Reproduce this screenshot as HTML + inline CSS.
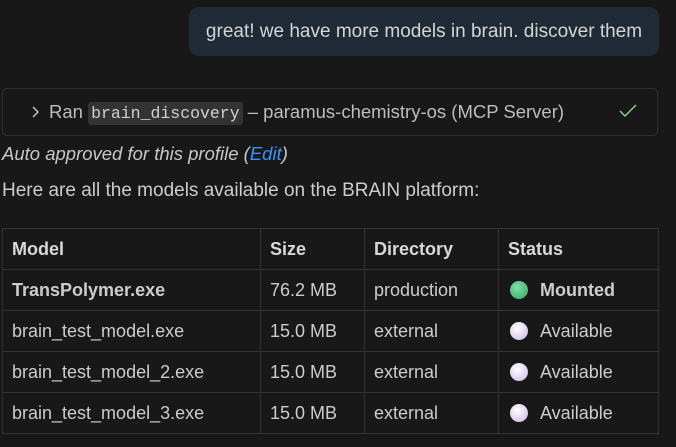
<!DOCTYPE html>
<html><head><style>
body{margin:0;width:676px;height:447px;background:#181818;color:#cccccc;font-family:"Liberation Sans",sans-serif;font-size:16px;position:relative;overflow:hidden}
.bubble{position:absolute;left:189px;top:7px;width:470px;height:49px;background:#1f2a36;border-radius:10px;color:#d4d4d4;font-size:19px;line-height:49px;text-align:center}
.tool{position:absolute;left:2px;top:88px;width:656px;height:48px;border:1px solid #2e2e2e;border-radius:5px;box-sizing:border-box}
.tool .t{position:absolute;top:0;line-height:46px;font-size:18.5px;color:#bdbdbd;white-space:nowrap}
code{font-family:"Liberation Mono",monospace;background:#333;border-radius:3px;padding:2px 3px;font-size:16.5px;color:#d0d0d0}
.auto{position:absolute;left:2px;top:143px;font-style:italic;font-size:18.5px;color:#c8c8c8}
.auto a{color:#3794ff}
.here{position:absolute;left:2px;top:180px;font-size:19px;color:#cccccc}
table{position:absolute;left:2px;top:228px;border-collapse:collapse;width:657px;font-size:18px}
td,th{border:1px solid #333;height:40px;padding:0 9px;text-align:left;color:#cccccc;white-space:nowrap}
th{color:#d8d8d8}
.dot{display:inline-block;width:18px;height:18px;border-radius:50%;vertical-align:-3px;margin-right:12px;margin-left:2px}
.g{background:radial-gradient(circle at 40% 35%,#7fe0a8,#2fa65e)}
.p{background:radial-gradient(circle at 40% 35%,#ffffff,#c9b3e6)}
</style></head><body>
<div class="bubble">great! we have more models in brain. discover them</div>
<div class="tool"><svg style="position:absolute;left:28px;top:17px" width="10" height="12" viewBox="0 0 10 12"><path d="M2 1l5 5-5 5" fill="none" stroke="#cccccc" stroke-width="1.4"/></svg>
<span class="t" style="left:46px">Ran <code>brain_discovery</code> – paramus-chemistry-os (MCP Server)</span>
<svg style="position:absolute;left:616px;top:14px" width="18" height="16" viewBox="0 0 18 16"><path d="M1 8l5 5L17 2" fill="none" stroke="#89d185" stroke-width="1.5"/></svg></div>
<div class="auto">Auto approved for this profile (<a>Edit</a>)</div>
<div class="here">Here are all the models available on the BRAIN platform:</div>
<table>
<colgroup><col style="width:258px"><col style="width:104px"><col style="width:134px"><col></colgroup>
<tr><th>Model</th><th>Size</th><th>Directory</th><th>Status</th></tr>
<tr><td><b>TransPolymer.exe</b></td><td>76.2 MB</td><td>production</td><td><span class="dot g"></span><b>Mounted</b></td></tr>
<tr><td>brain_test_model.exe</td><td>15.0 MB</td><td>external</td><td><span class="dot p"></span>Available</td></tr>
<tr><td>brain_test_model_2.exe</td><td>15.0 MB</td><td>external</td><td><span class="dot p"></span>Available</td></tr>
<tr><td>brain_test_model_3.exe</td><td>15.0 MB</td><td>external</td><td><span class="dot p"></span>Available</td></tr>
</table>
</body></html>
